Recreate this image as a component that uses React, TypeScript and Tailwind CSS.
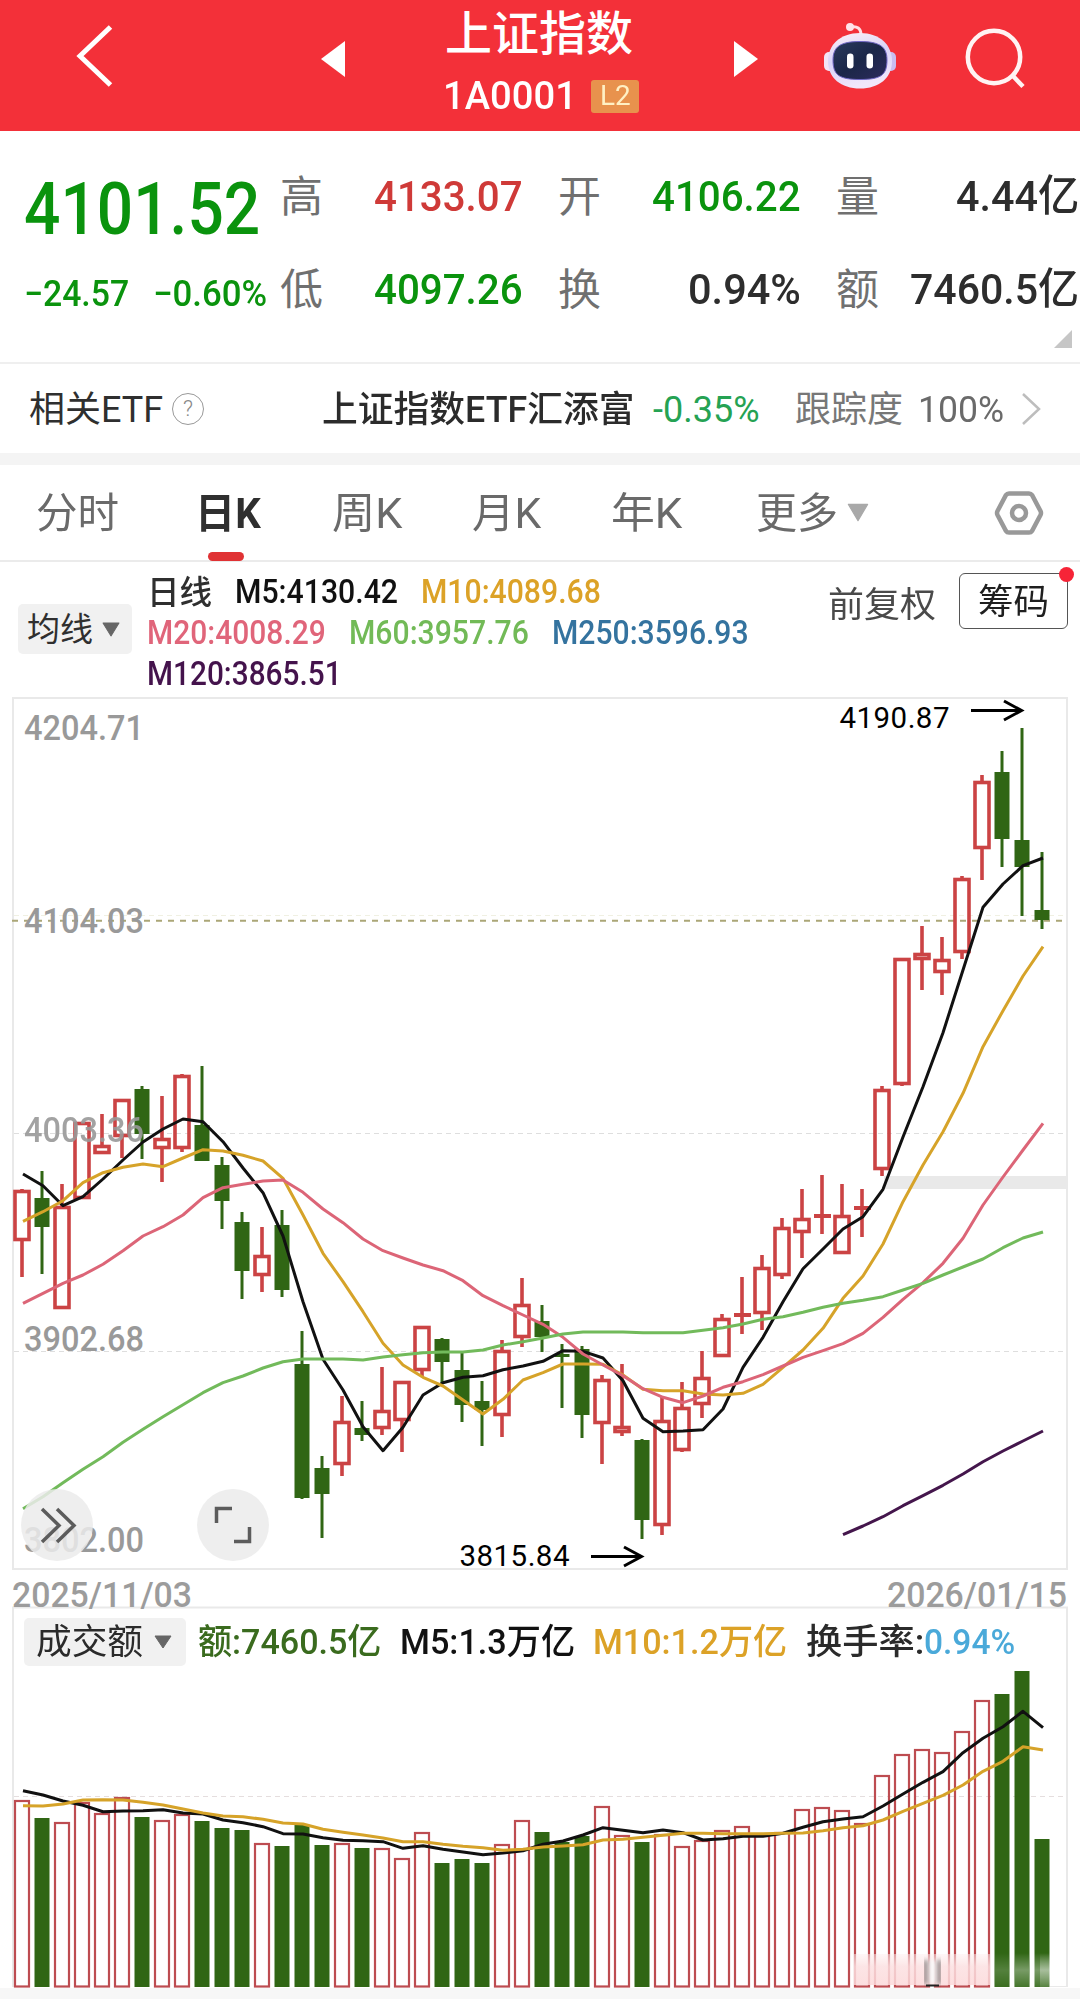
import { useLayoutEffect, useRef, useState } from "react";
import type { ReactNode } from "react";
import clsx from "clsx";

type Candle = ["up" | "down", number, number, number, number];

// [direction, high, body top, body bottom, low]
const candles: Candle[] = [
  ["up", 1189, 1190, 1241, 1277],
  ["down", 1171, 1198, 1227, 1274],
  ["up", 1184, 1206, 1309, 1309],
  ["up", 1122, 1122, 1199, 1199],
  ["up", 1114, 1145, 1154, 1154],
  ["up", 1099, 1099, 1137, 1158],
  ["down", 1086, 1089, 1134, 1159],
  ["up", 1096, 1138, 1149, 1182],
  ["up", 1074, 1075, 1149, 1152],
  ["down", 1066, 1125, 1161, 1161],
  ["down", 1157, 1165, 1201, 1229],
  ["down", 1212, 1222, 1271, 1299],
  ["up", 1227, 1255, 1276, 1292],
  ["down", 1210, 1225, 1290, 1297],
  ["down", 1331, 1364, 1498, 1499],
  ["down", 1456, 1468, 1494, 1538],
  ["up", 1396, 1421, 1465, 1476],
  ["down", 1401, 1428, 1435, 1441],
  ["up", 1367, 1410, 1429, 1435],
  ["up", 1381, 1381, 1421, 1452],
  ["up", 1326, 1326, 1371, 1377],
  ["down", 1338, 1339, 1362, 1383],
  ["down", 1353, 1370, 1405, 1422],
  ["down", 1381, 1401, 1410, 1446],
  ["up", 1340, 1350, 1416, 1437],
  ["up", 1278, 1304, 1338, 1347],
  ["down", 1305, 1321, 1337, 1352],
  ["down", 1344, 1354, 1357, 1408],
  ["down", 1346, 1349, 1415, 1438],
  ["up", 1375, 1379, 1424, 1464],
  ["up", 1364, 1426, 1433, 1436],
  ["down", 1439, 1440, 1520, 1539],
  ["up", 1396, 1420, 1526, 1535],
  ["up", 1382, 1407, 1451, 1452],
  ["up", 1351, 1377, 1405, 1418],
  ["up", 1314, 1318, 1357, 1357],
  ["up", 1277, 1313, 1317, 1334],
  ["up", 1255, 1267, 1314, 1330],
  ["up", 1218, 1227, 1276, 1279],
  ["up", 1189, 1218, 1233, 1258],
  ["up", 1175, 1214, 1218, 1234],
  ["up", 1184, 1215, 1254, 1254],
  ["up", 1189, 1206, 1210, 1237],
  ["up", 1086, 1089, 1170, 1176],
  ["up", 958, 958, 1085, 1086],
  ["up", 926, 953, 960, 990],
  ["up", 937, 959, 973, 995],
  ["up", 876, 878, 953, 959],
  ["up", 775, 781, 849, 880],
  ["down", 751, 772, 839, 867],
  ["down", 728, 840, 867, 916],
  ["down", 852, 910, 920, 929],
];

const volumes = [
  1800, 1818, 1822, 1802, 1813, 1797, 1817, 1820, 1814, 1821, 1828, 1830, 1843, 1846, 1825, 1845,
  1843, 1848, 1848, 1858, 1832, 1863, 1859, 1863, 1844, 1820, 1832, 1842, 1836, 1806, 1835, 1842,
  1834, 1846, 1840, 1830, 1826, 1835, 1832, 1809, 1807, 1810, 1823, 1775, 1754, 1749, 1752, 1731,
  1700, 1694, 1671, 1839,
];

const ma5 = [
  1174, 1185.7, 1205.7, 1196.7, 1179, 1160, 1142, 1129, 1119, 1121.7, 1141.7, 1168, 1192.7, 1236,
  1301.7, 1359.3, 1390, 1426.7, 1450.7, 1427.3, 1395, 1382.7, 1377.3, 1375.7, 1369.7, 1366, 1361.3,
  1350.7, 1351.3, 1358, 1380.7, 1418.3, 1431.7, 1431, 1429.7, 1409, 1367.3, 1337.3, 1301.7, 1268.7,
  1249, 1229, 1216.7, 1189.3, 1137, 1086.7, 1032.7, 970, 907.3, 884, 865.7, 858,
];

const ma10 = [
  1221.3, 1211.7, 1200.7, 1182.7, 1172.7, 1167.3, 1164, 1166.7, 1158, 1149.7, 1151, 1155.3, 1161,
  1178.3, 1215, 1253.3, 1281.7, 1311.7, 1343.3, 1365, 1377.3, 1386, 1400, 1414, 1399.3, 1380,
  1372.7, 1364, 1364, 1364.3, 1375, 1389.3, 1390.7, 1390.7, 1394, 1395, 1393.3, 1384.3, 1367.3,
  1350, 1328.3, 1298.3, 1276, 1244, 1201.7, 1165, 1131.7, 1093.3, 1046.7, 1010.7, 976, 946.7,
];

const ma20 = [
  1303.3, 1293.3, 1283.3, 1275, 1264.3, 1250.7, 1236, 1226.7, 1215, 1197.7, 1187.7, 1184.3, 1181,
  1180, 1192.3, 1209, 1222.7, 1239, 1250.7, 1258, 1265, 1270.7, 1280.7, 1295.7, 1305.7, 1315,
  1324.3, 1337.3, 1354, 1365, 1375.7, 1388.7, 1397.3, 1402.7, 1396, 1387.3, 1381.7, 1374.7, 1366,
  1357.3, 1350.7, 1343.7, 1333.3, 1317.3, 1299.3, 1282.7, 1263.3, 1238.3, 1205, 1177, 1150, 1123.3,
];

const ma60 = [
  1508.7, 1496.7, 1482.7, 1469.3, 1456.7, 1442.3, 1429.3, 1416.7, 1404.7, 1392.7, 1382.7, 1376,
  1368, 1361.7, 1359, 1359, 1359, 1360, 1357, 1354.7, 1352.7, 1352, 1352, 1350, 1345, 1341.7, 1338,
  1334, 1332, 1332, 1332, 1332.7, 1332.7, 1332.7, 1330.3, 1327.7, 1324, 1319.3, 1316.7, 1312.3,
  1307.3, 1303.3, 1300.3, 1296.7, 1290, 1283.3, 1275, 1267, 1259, 1247.7, 1238, 1232,
];

const ma120 = [1534.7, 1526, 1516.7, 1505.7, 1495.7, 1485.3, 1474, 1461.7, 1451, 1441, 1431];

const volMa5 = [
  1790.7, 1795, 1801, 1805.3, 1811.7, 1811, 1810.7, 1809.7, 1813, 1814, 1820, 1822.7, 1826.7,
  1833.7, 1834, 1837.7, 1840.3, 1840.7, 1841.7, 1848.3, 1845.7, 1849.3, 1852, 1854.7, 1853, 1850.7,
  1844.3, 1841, 1835, 1827.7, 1830.3, 1832.7, 1830, 1832.7, 1840, 1838.7, 1836.3, 1836.3, 1833.3,
  1827.3, 1821.7, 1819, 1816.7, 1806, 1794, 1782.3, 1771.7, 1752.7, 1738.3, 1726.7, 1711.3, 1727.7,
];

const volMa10 = [
  1805.7, 1806, 1804, 1800, 1799.7, 1800, 1802.3, 1805, 1809, 1813, 1816, 1816.7, 1819.3, 1823,
  1824, 1829.3, 1832.3, 1835, 1838, 1841.7, 1841.7, 1844.3, 1846.3, 1847.7, 1850.3, 1849.3, 1847,
  1846, 1844.7, 1840, 1839.3, 1837.3, 1835.3, 1833.3, 1833.3, 1833.7, 1833.7, 1833.7, 1833.3, 1833,
  1830.7, 1827.7, 1825.7, 1820, 1811.3, 1803.3, 1795.3, 1785, 1771.3, 1761.3, 1746.7, 1750,
];

const UP = "#cb4344";
const DOWN = "#306614";
const STEP = 20;
const cx = (i: number) => 22 + i * STEP;
const toPoints = (ys: number[], start = 0) =>
  ys.map((y, i) => `${cx(i + start) + 1},${y}`).join(" ");

/** Squeezes its text horizontally so that it fills the width given by the class. */
function Fit({ className, children }: { className?: string; children: ReactNode }) {
  const outer = useRef<HTMLSpanElement>(null);
  const inner = useRef<HTMLSpanElement>(null);
  const [scale, setScale] = useState(1);

  useLayoutEffect(() => {
    if (outer.current && inner.current) {
      setScale(outer.current.clientWidth / inner.current.offsetWidth);
    }
  }, [children]);

  return (
    <span ref={outer} className={clsx("block shrink-0", className)}>
      <span
        ref={inner}
        className="inline-block origin-left whitespace-nowrap align-top"
        style={{ transform: `scaleX(${scale})` }}
      >
        {children}
      </span>
    </span>
  );
}

function Caret({ className }: { className?: string }) {
  return (
    <svg viewBox="0 0 20 14" preserveAspectRatio="none" className={clsx("shrink-0", className)}>
      <path d="M2 1h16L10 13z" fill="currentColor" stroke="currentColor" strokeLinejoin="round" />
    </svg>
  );
}

function RobotIcon() {
  return (
    <svg viewBox="0 0 72 68" className="h-[68px] w-[72px] shrink-0">
      <defs>
        <linearGradient id="shell" x1="0" y1="0" x2="0.3" y2="1">
          <stop offset="0" stopColor="#fff1f6" />
          <stop offset="0.5" stopColor="#d9d4f8" />
          <stop offset="1" stopColor="#f1e6fa" />
        </linearGradient>
        <linearGradient id="visor" x1="0" y1="0" x2="1" y2="1">
          <stop offset="0" stopColor="#2a3a5c" />
          <stop offset="0.5" stopColor="#1b2748" />
          <stop offset="1" stopColor="#2c2a5c" />
        </linearGradient>
      </defs>
      <path d="M27 5c6-1 10 1 10 8" fill="none" stroke="#ffdfe6" strokeWidth="3" />
      <circle cx="26" cy="5" r="4" fill="#ffe3ea" />
      <rect x="0" y="30" width="12" height="19" rx="5" fill="#f3e4f6" />
      <rect x="60" y="30" width="12" height="19" rx="5" fill="#c9bdf0" />
      <path
        d="M36 11C56 11 68 23 68 39C68 56 55 66.500 36 66.500C17 66.500 4 56 4 39C4 23 16 11 36 11Z"
        fill="url(#shell)"
      />
      <path
        d="M36 19.500C56 19.500 63 25 63 38C63 53 57 57.500 36 57.500C15 57.500 9 53 9 38C9 25 16 19.500 36 19.500Z"
        fill="url(#visor)"
        stroke="#6f66c4"
        strokeWidth="1"
      />
      <rect x="23" y="31.500" width="6.500" height="15" rx="3.200" fill="#fff" />
      <rect x="42.500" y="31.500" width="6.500" height="15" rx="3.200" fill="#fff" />
    </svg>
  );
}

function Header() {
  return (
    <header className="h-[131px] bg-[#f33039] text-white">
      <div className="flex h-[116px] items-center">
        <div className="w-[321px] shrink-0 pl-[74px]">
          <svg viewBox="0 0 40 64" className="-mt-1 h-16 w-10">
            <path d="M36.500 3L6 32L36.500 61" fill="none" stroke="#fff" strokeWidth="5" />
          </svg>
        </div>
        <svg viewBox="0 0 24 36" className="mt-0.5 h-9 w-6 shrink-0">
          <path d="M24 0V36L0 18z" fill="#fff" />
        </svg>
        <div className="h-full w-[389px] shrink-0 pt-[10px]">
          <Fit className="ml-[100px] w-[188px] text-[47px] font-medium leading-[48px]">上证指数</Fit>
          <div className="mt-[21px] flex h-[34px] items-center pl-[98px]">
            <Fit className="w-[134px] text-[38.500px] font-medium leading-[34px]">1A0001</Fit>
            <span className="ml-3.5 flex h-[33px] w-12 items-center justify-center rounded-[3px] bg-[#e8924d]">
              <Fit className="w-[31px] text-[27px] leading-[33px] text-[#fff0c4]">L2</Fit>
            </span>
          </div>
        </div>
        <svg viewBox="0 0 24 36" className="mt-0.5 h-9 w-6 shrink-0">
          <path d="M0 0V36L24 18z" fill="#fff" />
        </svg>
        <div className="-mt-1 ml-[66px]">
          <RobotIcon />
        </div>
        <svg viewBox="0 0 64 64" className="ml-[67px] mt-0.5 h-16 w-16 shrink-0">
          <circle cx="31" cy="30" r="26.200" fill="none" stroke="#fff3f3" strokeWidth="4.500" />
          <path d="M50 49L60 59.500" stroke="#fff3f3" strokeWidth="4.500" />
        </svg>
      </div>
    </header>
  );
}

interface StatProps {
  label: string;
  value: string;
  className: string;
}

function Stat({ label, value, className }: StatProps) {
  return (
    <div className="flex w-[243px] shrink-0 items-center justify-between">
      <Fit className="w-[43px] pt-0.5 text-[43px] leading-[60px] text-[#707070]">{label}</Fit>
      <Fit className={clsx("text-[43px] font-medium leading-[60px]", className)}>{value}</Fit>
    </div>
  );
}

function Quote() {
  return (
    <section className="relative flex h-[231px]">
      <div className="w-[280px] shrink-0 pl-6 pt-[39px] text-[#0a930d]">
        <Fit className="w-[236px] text-[73px] font-medium leading-[79px]">4101.52</Fit>
        <div className="flex h-[90px] items-center text-[36px] font-medium leading-[50px]">
          <Fit className="w-[105px]">−24.57</Fit>
          <Fit className="ml-6 w-[114px]">−0.60%</Fit>
        </div>
      </div>
      <div className="pt-[18px]">
        <div className="flex h-[93px] items-center gap-[35px]">
          <Stat label="高" value="4133.07" className="w-[149px] text-[#cf3a38]" />
          <Stat label="开" value="4106.22" className="w-[149px] text-[#0a930d]" />
          <Stat label="量" value="4.44亿" className="w-[123px] text-[#2d2d2d]" />
        </div>
        <div className="flex h-[93px] items-center gap-[35px]">
          <Stat label="低" value="4097.26" className="w-[149px] text-[#0a930d]" />
          <Stat label="换" value="0.94%" className="w-[113px] text-[#2d2d2d]" />
          <Stat label="额" value="7460.5亿" className="w-[169px] text-[#2d2d2d]" />
        </div>
      </div>
      <svg viewBox="0 0 18 18" className="absolute bottom-3.5 right-2 h-[18px] w-[18px]">
        <path d="M18 0V18H0z" fill="#c6c6c6" />
      </svg>
    </section>
  );
}

function RelatedEtf() {
  return (
    <section className="flex h-[91px] items-center border-t-2 border-[#efefef] pl-[29px] pt-px text-[36px] leading-[50px]">
      <Fit className="w-[134px] pt-0.5 text-[#2f2f2f]">相关ETF</Fit>
      <span className="-mt-px ml-[9px] flex size-8 items-center justify-center rounded-full border-[1.5px] border-[#999] text-[22px] font-light leading-none text-[#888]">
        ?
      </span>
      <Fit className="ml-[118px] w-[312px] pt-0.5 font-medium text-[#2b2b2b]">上证指数ETF汇添富</Fit>
      <Fit className="ml-[19px] w-[107px] pt-px text-[#25a253]">-0.35%</Fit>
      <Fit className="ml-[35px] w-[108px] pt-0.5 text-[#777]">跟踪度</Fit>
      <Fit className="ml-[15px] w-[86px] pt-px text-[#6a6a6a]">100%</Fit>
      <svg viewBox="0 0 22 36" className="ml-4 h-9 w-[22px] shrink-0">
        <path d="M3 3L19 18L3 33" fill="none" stroke="#bdbdbd" strokeWidth="2.500" />
      </svg>
    </section>
  );
}

function Tabs() {
  return (
    <nav className="flex h-[97px] items-center border-b-2 border-[#ebebeb] pl-9 text-[42px] leading-[60px] text-[#6a6a6a]">
      <Fit className="w-[83px] pt-[3px]">分时</Fit>
      <span className="relative ml-[76px] flex h-full items-center">
        <Fit className="w-[66px] pt-[3px] font-bold text-[#2f2f2f]">日K</Fit>
        <span className="absolute -bottom-px left-[13px] h-[9px] w-9 rounded-full bg-[#e03234]" />
      </span>
      <Fit className="ml-[71px] w-[70px] pt-[3px]">周K</Fit>
      <Fit className="ml-[70px] w-[69px] pt-[3px]">月K</Fit>
      <Fit className="ml-[70px] w-[71px] pt-[3px]">年K</Fit>
      <Fit className="ml-[74px] w-[82px] pt-[3px]">更多</Fit>
      <Caret className="ml-2 h-[19px] w-[24px] text-[#a9a9a9]" />
      <svg viewBox="0 0 52 48" className="ml-[123px] h-12 w-[52px] shrink-0">
        <path
          d="M16 4.500H36Q38 4.500 39 6L47.500 22Q48.500 24 47.500 26L39 42Q38 43.500 36 43.500H16Q14 43.500 13 42L4.500 26Q3.500 24 4.500 22L13 6Q14 4.500 16 4.500Z"
          fill="none"
          stroke="#999"
          strokeWidth="4.500"
        />
        <circle cx="26" cy="24" r="7" fill="none" stroke="#999" strokeWidth="4.500" />
      </svg>
    </nav>
  );
}

function MovingAverages() {
  return (
    <section className="flex h-[134px] pl-[18px]">
      <div className="mt-[42px] flex h-[50px] w-[114px] shrink-0 items-center rounded-[5px] bg-[#f1f1f1] pl-[9px] text-[33px] text-[#2f2f2f]">
        <Fit className="w-[66px] pt-0.5 leading-[50px]">均线</Fit>
        <Caret className="ml-2 h-[15px] w-5 text-[#666]" />
      </div>
      <div className="ml-[15px] w-[681px] shrink-0 pt-[9px] text-[33px] font-medium leading-[41px]">
        <div className="flex">
          <Fit className="w-[65px] pt-px text-[#2f2f2f]">日线</Fit>
          <Fit className="ml-[23px] w-[163px] text-[#111]">M5:4130.42</Fit>
          <Fit className="ml-[23px] w-[180px] text-[#dca227]">M10:4089.68</Fit>
        </div>
        <div className="-mt-px flex">
          <Fit className="w-[179px] text-[#e0657a]">M20:4008.29</Fit>
          <Fit className="ml-[23px] w-[180px] text-[#72ba57]">M60:3957.76</Fit>
          <Fit className="ml-[23px] w-[197px] text-[#34739f]">M250:3596.93</Fit>
        </div>
        <Fit className="w-[195px] text-[#44134c]">M120:3865.51</Fit>
      </div>
      <Fit className="mt-[19px] w-[108px] text-[35px] leading-[50px] text-[#4a4a4a]">前复权</Fit>
      <div className="relative ml-[23px] mt-[11px] flex h-[56px] w-[109px] shrink-0 items-center justify-center rounded-md border-[1.5px] border-[#555]">
        <Fit className="w-[71px] pt-[3px] text-[35px] leading-[50px] text-[#1f1f1f]">筹码</Fit>
        <span className="absolute -right-[7px] -top-[7px] size-[15px] rounded-full bg-[#f62437]" />
      </div>
    </section>
  );
}

function AxisLabel({ y, text }: { y: number; text: string }) {
  return (
    <text x="24" y={y} textLength="120" lengthAdjust="spacingAndGlyphs" fontSize="35" fontWeight="500" fill="#999">
      {text}
    </text>
  );
}

function PriceChart() {
  return (
    <svg viewBox="0 696 1080 876" className="block h-[876px] w-[1080px]">
      <rect x="13" y="698" width="1054" height="871" fill="none" stroke="#e9e9e9" strokeWidth="2" />
      <rect x="884" y="1176" width="183" height="13" fill="#e9e9e9" />
      <g strokeDasharray="5 4" stroke="#dedede">
        <line x1="14" x2="1066" y1="1133.500" y2="1133.500" />
        <line x1="14" x2="1066" y1="1351.500" y2="1351.500" />
        <line x1="14" x2="1066" y1="915.500" y2="915.500" stroke="#f0f0e2" />
      </g>
      <line x1="12" x2="1066" y1="920.800" y2="920.800" stroke="#aba677" strokeWidth="2" strokeDasharray="6 6" />

      {candles.map(([dir, high, top, bottom, low], i) =>
        dir === "up" ? (
          <g key={i} stroke={UP} strokeWidth="3.600" fill="none">
            <path d={`M${cx(i)} ${high}V${top}M${cx(i)} ${bottom}V${low}`} />
            {bottom - top < 5 ? (
              <path d={`M${cx(i) - 8} ${(top + bottom) / 2}h17`} strokeWidth={bottom - top} />
            ) : (
              <rect x={cx(i) - 7} y={top + 1.5} width="14" height={bottom - top - 3} />
            )}
          </g>
        ) : (
          <g key={i} fill={DOWN}>
            <rect x={cx(i) - 1.5} y={high} width="3" height={low - high} />
            <rect x={cx(i) - 7.5} y={top} width="15" height={bottom - top} />
          </g>
        ),
      )}

      <g fontFamily="Roboto, sans-serif">
        <AxisLabel y={740} text="4204.71" />
        <AxisLabel y={933} text="4104.03" />
        <g opacity="0.9">
          <AxisLabel y={1142} text="4003.36" />
        </g>
        <AxisLabel y={1351} text="3902.68" />
        <AxisLabel y={1552} text="3802.00" />
      </g>

      <g fill="none" strokeWidth="3" strokeLinejoin="round">
        <polyline points={toPoints(ma5)} stroke="#111" />
        <polyline points={toPoints(ma10)} stroke="#d6a329" />
        <polyline points={toPoints(ma20)} stroke="#dc6577" />
        <polyline points={toPoints(ma60)} stroke="#72ba5b" />
        <polyline points={toPoints(ma120, 41)} stroke="#44164c" />
      </g>

      <g fontFamily="Roboto, sans-serif" fontSize="29.500" fill="#000">
        <text x="839.500" y="728" textLength="110">4190.87</text>
        <text x="459.500" y="1566" textLength="110">3815.84</text>
      </g>
      <g fill="none" stroke="#000" strokeWidth="3">
        <path d="M971 710.500H1021M1004 701L1021.500 710.500L1004 720" />
        <path d="M591 1556.500H641M624 1547L641.500 1556.500L624 1566" />
      </g>

      <g fill="#ebebeb" fillOpacity="0.85">
        <circle cx="57" cy="1525" r="36" />
        <circle cx="233" cy="1525" r="36" />
      </g>
      <g fill="none" stroke="#5c5c5c" strokeWidth="3.500">
        <path d="M42 1509L59 1525.500L42 1542M57 1509L74 1525.500L57 1542" />
        <path d="M216.500 1523V1508.500H232M234 1541.500H249.500V1527" />
      </g>
    </svg>
  );
}

function VolumeChart() {
  return (
    <div className="relative h-[436px] overflow-hidden">
      <svg viewBox="0 1572 1080 436" className="block h-[436px] w-[1080px]">
        <defs>
          <filter id="haze" x="-20%" y="-20%" width="140%" height="140%">
            <feGaussianBlur stdDeviation="2" />
          </filter>
          <linearGradient id="fade" x1="0" y1="0" x2="0" y2="1">
            <stop offset="0" stopColor="#fff" stopOpacity="0" />
            <stop offset="0.5" stopColor="#fff" stopOpacity="0.35" />
            <stop offset="1" stopColor="#fff" stopOpacity="0.1" />
          </linearGradient>
          <linearGradient id="blush" x1="0" y1="0" x2="0" y2="1">
            <stop offset="0" stopColor="#fdeeee" stopOpacity="0.5" />
            <stop offset="0.4" stopColor="#fce0e1" stopOpacity="0.85" />
            <stop offset="1" stopColor="#fcd9da" stopOpacity="0.85" />
          </linearGradient>
        </defs>
        <rect x="0" y="1988" width="1080" height="11" fill="#f7f7f7" />
        <path d="M13 1987V1607.500H1067V1987" fill="none" stroke="#e9e9e9" strokeWidth="2" />
        <path d="M1050 1986.500H1067" stroke="#e9e9e9" strokeWidth="1" />
        <g fontFamily="Roboto, sans-serif" fontSize="35.500" fontWeight="500" fill="#9c9c9c">
          <text x="12" y="1606.500" textLength="180" lengthAdjust="spacingAndGlyphs">2025/11/03</text>
          <text x="887" y="1606.500" textLength="180" lengthAdjust="spacingAndGlyphs">2026/01/15</text>
        </g>
        <line x1="14" x2="1066" y1="1796.500" y2="1796.500" stroke="#e5dede" strokeDasharray="5 4" />

        {volumes.map((top, i) =>
          candles[i][0] === "up" ? (
            <rect
              key={i}
              x={cx(i) - 7}
              y={top + 1}
              width="14"
              height={1985.5 - top}
              fill="none"
              stroke="#bd4c51"
              strokeWidth="2.200"
            />
          ) : (
            <rect key={i} x={cx(i) - 7.5} y={top} width="15" height={1987 - top} fill={DOWN} />
          ),
        )}

        <g fill="none" strokeWidth="3" strokeLinejoin="round">
          <polyline points={toPoints(volMa5)} stroke="#111" />
          <polyline points={toPoints(volMa10)} stroke="#d6a329" />
        </g>

        {/* translucent strip over the foot of the latest bars */}
        <rect x="854" y="1954" width="136" height="31" fill="url(#blush)" />
        <rect x="995" y="1953" width="14" height="34" fill="url(#fade)" opacity="0.5" />
        <rect x="1015" y="1953" width="14" height="34" fill="url(#fade)" />
        <rect x="1034" y="1953" width="16" height="34" fill="url(#fade)" />
        <rect x="1040" y="1953" width="10" height="34" fill="url(#fade)" />
        <g filter="url(#haze)">
          <path d="M926.500 1984V1960M938.500 1984V1960" stroke="#333" strokeWidth="4" opacity="0.700" />
          <path d="M932.500 1984V1960" stroke="#fff" strokeWidth="6" />
        </g>
        <path d="M926 1985.500H939" stroke="#222" strokeWidth="2" />
      </svg>

      <div className="absolute left-6 top-[46px] flex h-[48px] items-center text-[35px] font-medium leading-[48px]">
        <div className="flex h-full w-[162px] items-center rounded-[5px] bg-[#f1f1f1] pl-3">
          <Fit className="w-[107px] pt-0.5 font-normal text-[#2b2b2b]">成交额</Fit>
          <Caret className="ml-2.5 h-[14px] w-5 text-[#666]" />
        </div>
        <Fit className="ml-3 w-[183px] pt-px text-[#3a6b1e]">额:7460.5亿</Fit>
        <Fit className="ml-[19px] w-[175px] pt-px text-[#111]">M5:1.3万亿</Fit>
        <Fit className="ml-[18px] w-[194px] pt-px text-[#dca227]">M10:1.2万亿</Fit>
        <Fit className="ml-[19px] w-[118px] pt-px text-[#2b2b2b]">换手率:</Fit>
        <Fit className="w-[91px] pt-px text-[#4aa9d9]">0.94%</Fit>
      </div>
    </div>
  );
}

export default function App() {
  return (
    <main className="h-[2008px] w-[1080px] overflow-hidden bg-white font-[Roboto,'Noto_Sans_CJK_SC',sans-serif]">
      <Header />
      <Quote />
      <RelatedEtf />
      <div className="h-3 bg-[#f4f4f4]" />
      <Tabs />
      <MovingAverages />
      <PriceChart />
      <VolumeChart />
    </main>
  );
}
